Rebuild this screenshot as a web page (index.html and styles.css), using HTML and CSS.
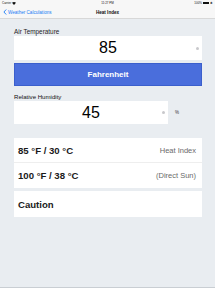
FILE: index.html
```html
<!DOCTYPE html>
<html>
<head>
<meta charset="utf-8">
<link rel="stylesheet" href="styles.css">
</head>
<body>
<div class="screen">
  <div class="status">
    <span class="carrier">Carrier <svg class="wifi" width="4" height="3" viewBox="0 0 8 6"><path d="M4 6 L0 1.5 Q4 -1.5 8 1.5 Z" fill="#111"/></svg></span>
    <span class="time">11:27 PM</span>
    <span class="batt">100% <span class="battery"><span class="level"></span></span><span class="bt">✱</span></span>
  </div>
  <div class="nav">
    <a class="back"><svg class="chev" width="4" height="6" viewBox="0 0 4 6"><path d="M3.2 0.5 L0.9 3 L3.2 5.5" fill="none" stroke="#1a7cf5" stroke-width="0.9"/></svg>Weather Calculations</a>
    <span class="title">Heat Index</span>
    <span></span>
  </div>
  <div class="content">
    <div class="label big">Air Temperature</div>
    <div class="field">
      <span class="value">85</span>
      <span class="clear"></span>
    </div>
    <div class="button">Fahrenheit</div>
    <div class="label small">Relative Humidity</div>
    <div class="hrow">
      <div class="field narrow">
        <span class="value">45</span>
        <span class="clear"></span>
      </div>
      <span class="unit">%</span>
    </div>
    <div class="card">
      <div class="row sep"><span class="main">85 °F / 30 °C</span><span class="side">Heat Index</span></div>
      <div class="row"><span class="main">100 °F / 38 °C</span><span class="side">(Direct Sun)</span></div>
    </div>
    <div class="card second">
      <div class="row"><span class="main">Caution</span></div>
    </div>
  </div>
  <div class="spacer"></div>
  <div class="bottom"></div>
</div>
</body>
</html>
```
FILE: styles.css
```css
html, body {
  margin: 0;
  padding: 0;
}
body {
  font-family: "Liberation Sans", Arial, sans-serif;
  background: #e9edf1;
}
.screen {
  width: 215px;
  height: 288px;
  display: flex;
  flex-direction: column;
  overflow: hidden;
}
.status {
  height: 6px;
  background: #f7f7f7;
  display: flex;
  justify-content: space-between;
  align-items: center;
  font-size: 3px;
  color: #111;
  padding: 0 2px;
}
.carrier, .batt {
  display: flex;
  align-items: center;
  gap: 1px;
  width: 30px;
}
.batt {
  justify-content: flex-end;
}
.battery {
  display: inline-flex;
  width: 6px;
  height: 2.5px;
  border: 0.4px solid #111;
  padding: 0.3px;
  box-sizing: border-box;
}
.level {
  flex: 1;
  background: #4cd964;
}
.bt {
  font-size: 2.5px;
}
.nav {
  height: 12px;
  background: #f7f7f7;
  border-bottom: 1px solid #d8d8d8;
  display: grid;
  grid-template-columns: 1fr auto 1fr;
  align-items: center;
  padding: 0 3px;
}
.back {
  color: #1a7cf5;
  font-size: 4.6px;
  display: flex;
  align-items: center;
  gap: 1px;
}
.title {
  font-size: 4.6px;
  font-weight: bold;
  color: #111;
}
.content {
  padding: 0 13px 0 14px;
  display: flex;
  flex-direction: column;
}
.label {
  color: #1d1d1d;
}
.label.big {
  font-size: 6.4px;
  margin-top: 9px;
  height: 8px;
  line-height: 8px;
}
.label.small {
  font-size: 6.1px;
  margin-top: 7px;
  height: 8px;
  line-height: 8px;
  color: #111;
}
.field {
  height: 24px;
  background: #fff;
  display: flex;
  align-items: center;
  justify-content: center;
  position: relative;
}
.value {
  font-size: 16px;
  color: #000;
}
.clear {
  position: absolute;
  right: 3px;
  top: 50%;
  width: 3px;
  height: 3px;
  margin-top: -1.5px;
  border-radius: 50%;
  background: #c8c8cc;
}
.button {
  margin-top: 3px;
  height: 23px;
  background: #4a6edc;
  border: 1px solid #3b5fcc;
  box-sizing: border-box;
  color: #fff;
  font-weight: bold;
  font-size: 8px;
  display: flex;
  align-items: center;
  justify-content: center;
}
.hrow {
  display: flex;
  align-items: center;
}
.field.narrow {
  width: 154px;
  height: 23px;
}
.unit {
  margin-left: 7px;
  font-size: 4.5px;
  color: #333;
}
.card {
  margin-top: 14px;
  background: #fff;
  display: flex;
  flex-direction: column;
}
.card.second {
  margin-top: 3px;
}
.row {
  height: 25px;
  display: flex;
  align-items: center;
  justify-content: space-between;
  padding: 0 6px 0 4px;
}
.card.second .row {
  height: 26px;
}
.row.sep {
  border-bottom: 1px solid #eeeeee;
  height: 24px;
}
.main {
  font-size: 9.6px;
  font-weight: bold;
  color: #1a1a1a;
}
.side {
  font-size: 7.5px;
  color: #6a6a6a;
}
.spacer {
  flex: 1;
}
.bottom {
  height: 1px;
  background: #c9ced3;
}
```
